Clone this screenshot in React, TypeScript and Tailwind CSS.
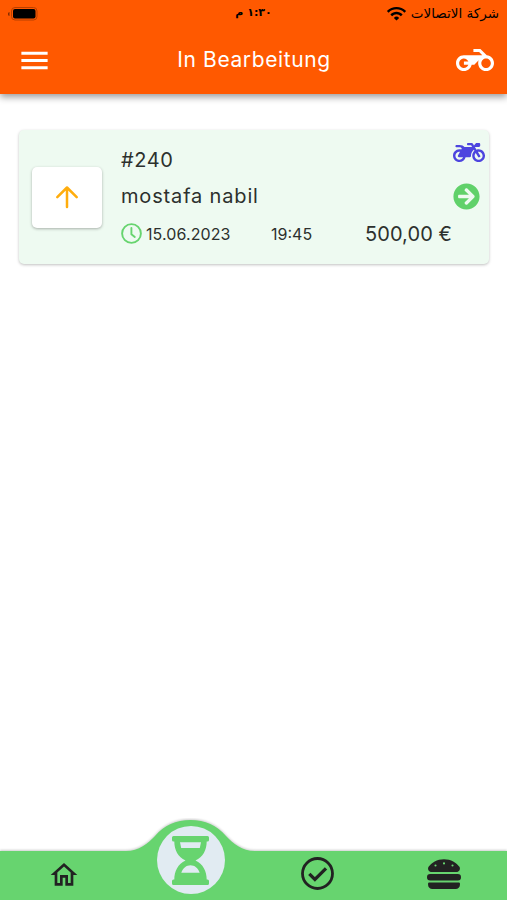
import { FaArrowCircleRight, FaHamburger, FaMotorcycle } from "react-icons/fa";
import { MdMenu, MdOutlineHome, MdWifi } from "react-icons/md";

const ORDERS = [
  {
    id: "#240",
    customer: "mostafa nabil",
    date: "15.06.2023",
    time: "19:45",
    total: "500,00 €",
  },
];

type Order = (typeof ORDERS)[number];

const BikeIcon = () => (
  <svg className="h-[38px] w-[38px]" viewBox="0 0 24 24" fill="currentColor">
    <path d="M19.440 9.030L15.410 5H11v2h3.590l2 2H5c-2.800 0-5 2.200-5 5s2.200 5 5 5c2.460 0 4.450-1.690 4.900-4h1.650l2.770-2.770c-.210.540-.320 1.140-.320 1.770 0 2.800 2.200 5 5 5s5-2.200 5-5c0-2.650-1.970-4.770-4.560-4.970zM7.820 15C7.400 16.150 6.280 17 5 17c-1.630 0-3-1.370-3-3s1.370-3 3-3c1.280 0 2.400.850 2.820 2H5v2h2.820zM19 17c-1.660 0-3-1.340-3-3s1.340-3 3-3 3 1.340 3 3-1.340 3-3 3z" />
  </svg>
);

const ArrowUpIcon = () => (
  <svg
    className="h-[24px] w-[24px] text-[#ffad0d]"
    viewBox="0 0 24 24"
    fill="none"
    stroke="currentColor"
    strokeWidth="2.500"
    strokeLinecap="round"
    strokeLinejoin="round"
  >
    <path d="M12 22V2.500M2.300 12.200L12 2.500l9.700 9.700" />
  </svg>
);

const ClockIcon = () => (
  <svg
    className="h-[21px] w-[21px] text-[#67d46f]"
    viewBox="0 0 21 21"
    fill="none"
    stroke="currentColor"
    strokeWidth="1.900"
  >
    <circle cx="10.500" cy="10.500" r="9.400" />
    <path d="M10.400 5v6.200l3.400 2.800" strokeLinecap="round" strokeLinejoin="round" />
  </svg>
);

const HourglassIcon = () => (
  <svg className="h-[49px] w-[37px] text-[#67d46f]" viewBox="0 0 37 49" fill="currentColor">
    <path
      fillRule="evenodd"
      d="M1.500 0h34A1.500 1.500 0 0 1 37 1.500V4a1.500 1.500 0 0 1-1.500 1.500h-.8C34.700 14 31 21 23.500 24.500 31 28 34.700 35 34.700 43.500h.8A1.500 1.500 0 0 1 37 45v2.500a1.500 1.500 0 0 1-1.500 1.500h-34A1.500 1.500 0 0 1 0 47.500V45a1.500 1.500 0 0 1 1.500-1.500h.8C2.300 35 6 28 13.500 24.500 6 21 2.300 14 2.300 5.500h-.8A1.500 1.500 0 0 1 0 4V1.500A1.500 1.500 0 0 1 1.500 0zM8 6.300l1.200 5.700h18.600L29 6.300zM9.300 36.700h18.400C26 32 22.500 29.300 18.500 29.300S11 32 9.300 36.700z"
    />
  </svg>
);

const CheckIcon = () => (
  <svg className="h-[33px] w-[33px]" viewBox="0 0 33 33" fill="none" stroke="currentColor">
    <circle cx="16.500" cy="16.500" r="15" strokeWidth="2.800" />
    <path d="M8.300 16.800l5.600 5.600L25 11.300" strokeWidth="3.300" />
  </svg>
);

const StatusBar = () => {
  return (
    <div className="grid grid-cols-3 items-center h-[27px] pl-2 pr-2 text-black font-['DejaVu_Sans',sans-serif]">
      <svg width="30" height="14" viewBox="0 0 30 14">
        <path d="M1.500 5v4C.5 9 0 8 0 7s.5-2 1.500-2z" fill="#7d2b00" />
        <rect x="3.500" y=".5" width="25.500" height="12.500" rx="3.500" fill="none" stroke="#b84000" />
        <rect x="5" y="2" width="22.500" height="9.500" rx="2" fill="#000" />
      </svg>
      <span dir="rtl" className="text-center text-[11px] font-bold">
        ١:٣٠ م
      </span>
      <div className="flex items-center justify-end gap-1">
        <MdWifi className="h-[21px] w-[21px]" />
        <span dir="rtl" className="text-[13.500px] whitespace-nowrap">
          شركة الاتصالات
        </span>
      </div>
    </div>
  );
};

const Header = () => {
  return (
    <header className="h-[94px] shrink-0 bg-[#ff5900] text-white shadow-[0_3px_7px_rgba(0,0,0,0.4)]">
      <StatusBar />
      <div className="flex items-center justify-between h-[66px] pl-[17px] pr-[13px]">
        <button>
          <MdMenu className="h-[35px] w-[35px]" />
        </button>
        <h1 className="text-[21px] tracking-[0.600px]">In Bearbeitung</h1>
        <BikeIcon />
      </div>
    </header>
  );
};

const OrderCard = ({ order }: { order: Order }) => {
  return (
    <div className="flex h-[134px] rounded-[5px] bg-[#eefaf1] text-[#2c302d] shadow-[0_1px_3px_rgba(0,0,0,0.25)]">
      <div className="flex items-center pl-[13px]">
        <div className="flex items-center justify-center h-[61px] w-[70px] rounded-[5px] bg-white shadow-[0_1px_3px_rgba(0,0,0,0.3)]">
          <ArrowUpIcon />
        </div>
      </div>
      <div className="flex flex-1 flex-col pl-[19px] pt-[11px]">
        <div className="flex items-center h-[37px] text-[20px] tracking-[0.600px]">{order.id}</div>
        <div className="flex items-center h-[36px] text-[20px] tracking-[0.840px]">
          {order.customer}
        </div>
        <div className="flex items-center h-[39px] text-[16px]">
          <ClockIcon />
          <span className="ml-1 w-[125px] tracking-[0.100px]">{order.date}</span>
          <span className="w-[94px]">{order.time}</span>
          <span className="text-[20px] tracking-[0.080px] whitespace-nowrap">{order.total}</span>
        </div>
      </div>
      <div className="flex flex-col w-[36px] pt-[9px]">
        <FaMotorcycle className="h-[27px] w-[32px] text-[#4d45df]" />
        <FaArrowCircleRight className="mt-[17px] h-[27px] w-[27px] text-[#60d16a]" />
      </div>
    </div>
  );
};

const BottomNav = () => {
  return (
    <nav className="relative h-[82px] shrink-0 text-[#222]">
      <svg className="absolute inset-0" width="507" height="82" viewBox="0 0 507 82">
        <path
          d="M0 33H126C139 33 148 25.500 155 18C164 7.500 176 2 190.500 2S217 7.500 226 18C233 25.500 242 33 255 33H507V82H0Z"
          fill="#67d46f"
          className="drop-shadow-[0_-1px_1px_rgba(0,0,0,0.2)]"
        />
      </svg>
      <div className="relative grid grid-cols-4 h-full pl-px">
        <div className="flex items-end justify-center pb-[9px]">
          <MdOutlineHome className="h-[32px] w-[32px]" />
        </div>
        <div className="flex items-end justify-center pb-[6px]">
          <div className="flex items-center justify-center h-[68px] w-[68px] rounded-full bg-[#e1ebf2]">
            <HourglassIcon />
          </div>
        </div>
        <div className="flex items-end justify-center pb-[10px]">
          <CheckIcon />
        </div>
        <div className="flex items-end justify-center pb-[9px]">
          <FaHamburger className="h-[34px] w-[34px]" />
        </div>
      </div>
    </nav>
  );
};

export default function App() {
  return (
    <div className="flex h-screen w-full flex-col overflow-hidden bg-white font-['Inter',sans-serif]">
      <Header />
      <main className="flex-1 pt-9 pl-[19px] pr-[18px]">
        {ORDERS.map((o) => (
          <OrderCard key={o.id} order={o} />
        ))}
      </main>
      <BottomNav />
    </div>
  );
}
